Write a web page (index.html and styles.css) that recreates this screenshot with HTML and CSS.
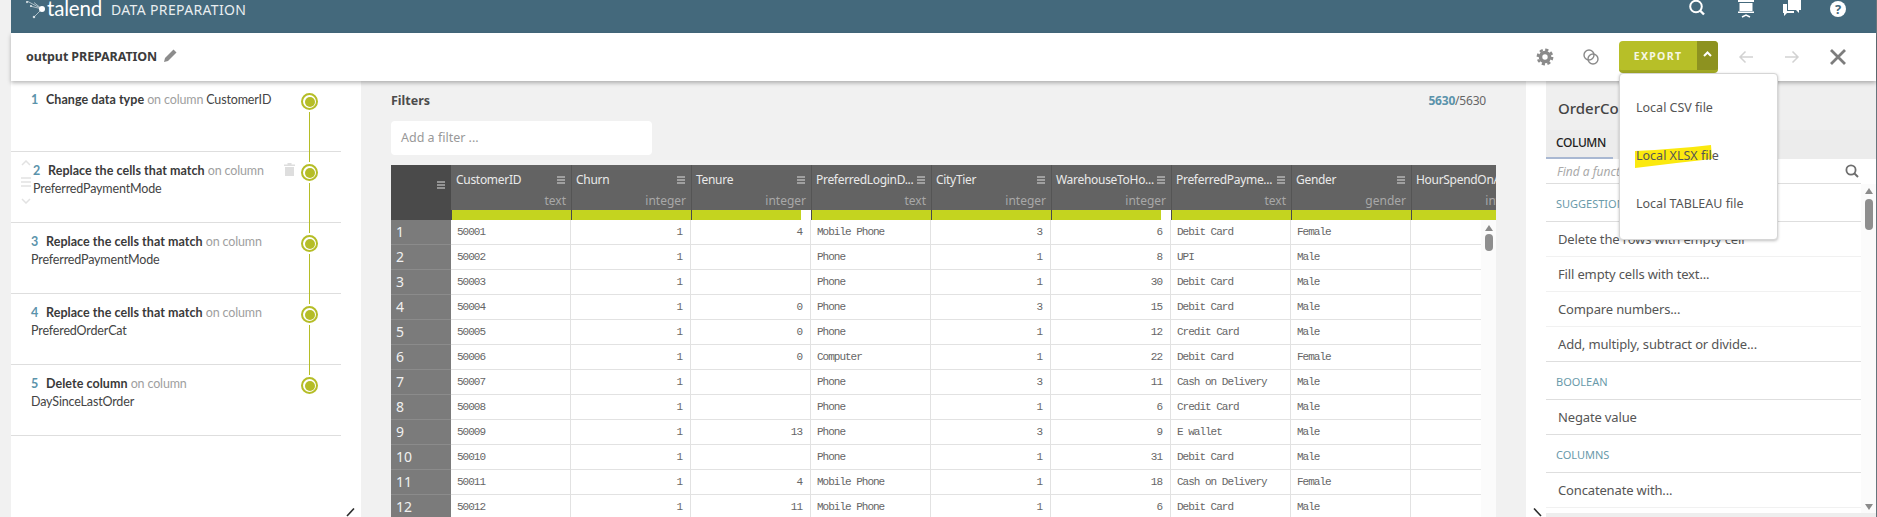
FILE: index.html
```html
<!DOCTYPE html>
<html lang="en">
<head>
<meta charset="utf-8">
<title>Talend Data Preparation</title>
<link rel="stylesheet" href="styles.css">
</head>
<body>
<svg class="defs" width="0" height="0" aria-hidden="true">
  <symbol id="ham" viewBox="0 0 8 8"><path d="M0 1h8M0 4h8M0 7h8" stroke="currentColor" stroke-width="1.2" fill="none"/></symbol>
</svg>
<div class="app">
  <header class="topbar">
    <div class="brand">
      <svg class="star" width="22" height="18" viewBox="0 0 22 18"><g stroke="#d8e2e6" stroke-width=".7" fill="#fff"><path d="M16 8 1 0M16 8 8 1.5M16 8 4 5M16 8 8 16" fill="none"/><circle cx="1" cy="1" r=".8"/><circle cx="8" cy="16" r=".9"/><circle cx="5" cy="5" r=".7"/></g><circle cx="16" cy="8" r="3" fill="#fff"/></svg>
      <span class="logo">talend</span>
      <span class="product">DATA PREPARATION</span>
    </div>
    <div class="top-icons">
      <span class="ibox shifted"><svg width="18" height="18" viewBox="0 0 18 18"><circle cx="8" cy="6.500" r="5.800" fill="none" stroke="#fff" stroke-width="2"/><path d="m12 10.500 4 4" stroke="#fff" stroke-width="2.400"/></svg></span>
      <span class="ibox"><svg width="18" height="18" viewBox="0 0 18 18"><path d="M1 0h16v2H1zM2.500 3h13v8h-13zM1 11.500h16V13H1z" fill="#fff"/><path d="m5 17 4-2 4 2" fill="none" stroke="#fff" stroke-width="1.500"/></svg></span>
      <span class="ibox"><svg width="18" height="18" viewBox="0 0 18 18"><path d="M5 0h13v10h-2v3l-3-3H5z" fill="#fff"/><path d="M0 4h4v7h7v2H4l-3 3v-3H0z" fill="#fff"/></svg></span>
      <span class="ibox"><span class="help">?</span></span>
    </div>
  </header>

  <div class="subbar">
    <div class="doc-title">
      <span>output PREPARATION</span>
      <svg width="14" height="14" viewBox="0 0 14 14"><path d="M10.500.500 13.500 3.500 5 12 1 13l1-4z" fill="#8c8c8c"/></svg>
    </div>
    <div class="actions">
      <span class="ibox"><svg width="18" height="18" viewBox="0 0 18 18"><circle cx="9" cy="9" r="4.500" fill="none" stroke="#8a8a8a" stroke-width="3.600"/><circle cx="9" cy="9" r="7.200" fill="none" stroke="#8a8a8a" stroke-width="2.400" stroke-dasharray="3.200 2.450"/></svg></span>
      <span class="ibox"><svg width="18" height="18" viewBox="0 0 18 18"><circle cx="7" cy="7" r="5" fill="none" stroke="#8a8a8a" stroke-width="1.400"/><circle cx="11" cy="11" r="5" fill="none" stroke="#8a8a8a" stroke-width="1.400"/></svg></span>
      <div class="export">
        <span class="export-label">EXPORT</span>
        <span class="export-caret"><svg width="9" height="6" viewBox="0 0 9 6"><path d="m1 5 3.500-3.500L8 5" fill="none" stroke="#fff" stroke-width="2"/></svg></span>
      </div>
      <span class="ibox"><svg width="16" height="14" viewBox="0 0 16 14"><path d="M15 7H2M7.500 1.500 2 7l5.500 5.500" fill="none" stroke="#d2d2d2" stroke-width="1.500"/></svg></span>
      <span class="ibox"><svg width="16" height="14" viewBox="0 0 16 14"><path d="M1 7h13M8.500 1.500 14 7l-5.500 5.500" fill="none" stroke="#d2d2d2" stroke-width="1.500"/></svg></span>
      <span class="ibox"><svg width="18" height="18" viewBox="0 0 18 18"><path d="m2 2 14 14M16 2 2 16" stroke="#7d7d7d" stroke-width="2.800"/></svg></span>
    </div>
    <div class="menu">
      <div class="menu-item">Local CSV file</div>
      <div class="menu-item">
        <svg class="marker" width="80" height="24" viewBox="0 0 80 24"><path d="M0 6Q40 4 76 0l1 14Q40 18 0 23z" fill="#fbe90e"/></svg>
        <span class="menu-text">Local XLSX file</span>
      </div>
      <div class="menu-item">Local TABLEAU file</div>
    </div>
  </div>

  <main class="main">
    <aside class="recipe">
      <div class="step first">
        <p class="step-text"><b class="num">1</b><b>Change data type</b> <i>on column</i> CustomerID</p>
        <span class="node"></span>
      </div>
      <div class="step hover">
        <span class="grip">
          <svg width="10" height="6" viewBox="0 0 10 6"><path d="m1 5 4-4 4 4" fill="none" stroke="#e2e2e2" stroke-width="1.500"/></svg>
          <svg width="10" height="10" viewBox="0 0 10 10"><path d="M0 1h10M0 5h10M0 9h10" stroke="#e2e2e2" stroke-width="1.500"/></svg>
          <svg width="10" height="6" viewBox="0 0 10 6"><path d="m1 1 4 4 4-4" fill="none" stroke="#e2e2e2" stroke-width="1.500"/></svg>
        </span>
        <p class="step-text"><b class="num">2</b><b>Replace the cells that match</b> <i>on column</i> PreferredPaymentMode</p>
        <svg class="trash" width="11" height="13" viewBox="0 0 11 13"><path d="M0 1.500h3.500V0h4v1.500H11V3H0zM1 4h9v9H1z" fill="#dedede"/></svg>
        <span class="node"></span>
      </div>
      <div class="step">
        <p class="step-text"><b class="num">3</b><b>Replace the cells that match</b> <i>on column</i> PreferredPaymentMode</p>
        <span class="node"></span>
      </div>
      <div class="step">
        <p class="step-text"><b class="num">4</b><b>Replace the cells that match</b> <i>on column</i> PreferedOrderCat</p>
        <span class="node"></span>
      </div>
      <div class="step">
        <p class="step-text"><b class="num">5</b><b>Delete column</b> <i>on column</i> DaySinceLastOrder</p>
        <span class="node"></span>
      </div>
      <svg class="collapse collapse-left" width="10" height="9" viewBox="0 0 10 9"><path d="M9 .5 2 8" fill="none" stroke="#2b2b2b" stroke-width="1.600"/></svg>
    </aside>

    <section class="center">
      <div class="filters-head">
        <span class="filters-title">Filters</span>
        <span class="count"><b>5630</b>/5630</span>
      </div>
      <div class="filter-input">Add a filter ...</div>
      <div class="table">
        <div class="thead">
          <div class="corner"><svg class="ham" width="8" height="8"><use href="#ham"/></svg></div>
          <div class="th"><div class="th-top"><span class="th-name">CustomerID</span><svg class="ham" width="8" height="8"><use href="#ham"/></svg></div><div class="th-type">text</div><div class="quality"></div></div>
          <div class="th"><div class="th-top"><span class="th-name">Churn</span><svg class="ham" width="8" height="8"><use href="#ham"/></svg></div><div class="th-type">integer</div><div class="quality"></div></div>
          <div class="th"><div class="th-top"><span class="th-name">Tenure</span><svg class="ham" width="8" height="8"><use href="#ham"/></svg></div><div class="th-type">integer</div><div class="quality gap"></div></div>
          <div class="th"><div class="th-top"><span class="th-name">PreferredLoginD...</span><svg class="ham" width="8" height="8"><use href="#ham"/></svg></div><div class="th-type">text</div><div class="quality"></div></div>
          <div class="th"><div class="th-top"><span class="th-name">CityTier</span><svg class="ham" width="8" height="8"><use href="#ham"/></svg></div><div class="th-type">integer</div><div class="quality"></div></div>
          <div class="th"><div class="th-top"><span class="th-name">WarehouseToHo...</span><svg class="ham" width="8" height="8"><use href="#ham"/></svg></div><div class="th-type">integer</div><div class="quality gap"></div></div>
          <div class="th"><div class="th-top"><span class="th-name">PreferredPayme...</span><svg class="ham" width="8" height="8"><use href="#ham"/></svg></div><div class="th-type">text</div><div class="quality"></div></div>
          <div class="th"><div class="th-top"><span class="th-name">Gender</span><svg class="ham" width="8" height="8"><use href="#ham"/></svg></div><div class="th-type">gender</div><div class="quality"></div></div>
          <div class="th"><div class="th-top"><span class="th-name">HourSpendOnApp</span></div><div class="th-type">integer</div><div class="quality"></div></div>
        </div>
        <div class="tbody-wrap">
          <div class="tbody">
            <div class="tr"><div class="idx">1</div><div class="td">50001</div><div class="td r">1</div><div class="td r">4</div><div class="td">Mobile Phone</div><div class="td r">3</div><div class="td r">6</div><div class="td">Debit Card</div><div class="td">Female</div><div class="td"></div></div>
            <div class="tr"><div class="idx">2</div><div class="td">50002</div><div class="td r">1</div><div class="td r"></div><div class="td">Phone</div><div class="td r">1</div><div class="td r">8</div><div class="td">UPI</div><div class="td">Male</div><div class="td"></div></div>
            <div class="tr"><div class="idx">3</div><div class="td">50003</div><div class="td r">1</div><div class="td r"></div><div class="td">Phone</div><div class="td r">1</div><div class="td r">30</div><div class="td">Debit Card</div><div class="td">Male</div><div class="td"></div></div>
            <div class="tr"><div class="idx">4</div><div class="td">50004</div><div class="td r">1</div><div class="td r">0</div><div class="td">Phone</div><div class="td r">3</div><div class="td r">15</div><div class="td">Debit Card</div><div class="td">Male</div><div class="td"></div></div>
            <div class="tr"><div class="idx">5</div><div class="td">50005</div><div class="td r">1</div><div class="td r">0</div><div class="td">Phone</div><div class="td r">1</div><div class="td r">12</div><div class="td">Credit Card</div><div class="td">Male</div><div class="td"></div></div>
            <div class="tr"><div class="idx">6</div><div class="td">50006</div><div class="td r">1</div><div class="td r">0</div><div class="td">Computer</div><div class="td r">1</div><div class="td r">22</div><div class="td">Debit Card</div><div class="td">Female</div><div class="td"></div></div>
            <div class="tr"><div class="idx">7</div><div class="td">50007</div><div class="td r">1</div><div class="td r"></div><div class="td">Phone</div><div class="td r">3</div><div class="td r">11</div><div class="td">Cash on Delivery</div><div class="td">Male</div><div class="td"></div></div>
            <div class="tr"><div class="idx">8</div><div class="td">50008</div><div class="td r">1</div><div class="td r"></div><div class="td">Phone</div><div class="td r">1</div><div class="td r">6</div><div class="td">Credit Card</div><div class="td">Male</div><div class="td"></div></div>
            <div class="tr"><div class="idx">9</div><div class="td">50009</div><div class="td r">1</div><div class="td r">13</div><div class="td">Phone</div><div class="td r">3</div><div class="td r">9</div><div class="td">E wallet</div><div class="td">Male</div><div class="td"></div></div>
            <div class="tr"><div class="idx">10</div><div class="td">50010</div><div class="td r">1</div><div class="td r"></div><div class="td">Phone</div><div class="td r">1</div><div class="td r">31</div><div class="td">Debit Card</div><div class="td">Male</div><div class="td"></div></div>
            <div class="tr"><div class="idx">11</div><div class="td">50011</div><div class="td r">1</div><div class="td r">4</div><div class="td">Mobile Phone</div><div class="td r">1</div><div class="td r">18</div><div class="td">Cash on Delivery</div><div class="td">Female</div><div class="td"></div></div>
            <div class="tr"><div class="idx">12</div><div class="td">50012</div><div class="td r">1</div><div class="td r">11</div><div class="td">Mobile Phone</div><div class="td r">1</div><div class="td r">6</div><div class="td">Debit Card</div><div class="td">Male</div><div class="td"></div></div>
          </div>
          <div class="vscroll">
            <span class="tri-up"></span>
            <span class="thumb"></span>
          </div>
        </div>
      </div>
    </section>

    <aside class="functions">
      <svg class="collapse collapse-right" width="10" height="9" viewBox="0 0 10 9"><path d="M1 .5 8 8" fill="none" stroke="#2b2b2b" stroke-width="1.600"/></svg>
      <div class="fn-head">
        <div class="fn-title">OrderCount</div>
        <div class="fn-tabs"><span class="fn-tab">COLUMN</span></div>
      </div>
      <div class="fn-search">
        <span>Find a function...</span>
        <svg width="14" height="14" viewBox="0 0 14 14"><circle cx="6" cy="6" r="4.600" fill="none" stroke="#6e6e6e" stroke-width="1.800"/><path d="m9.500 9.500 3.500 3.500" stroke="#6e6e6e" stroke-width="2"/></svg>
      </div>
      <div class="fn-body">
        <div class="fn-list">
          <div class="fn-group">SUGGESTIONS</div>
          <div class="fn-item">Delete the rows with empty cell</div>
          <div class="fn-item">Fill empty cells with text...</div>
          <div class="fn-item">Compare numbers...</div>
          <div class="fn-item last">Add, multiply, subtract or divide...</div>
          <div class="fn-group">BOOLEAN</div>
          <div class="fn-item last">Negate value</div>
          <div class="fn-group">COLUMNS</div>
          <div class="fn-item">Concatenate with...</div>
        </div>
        <div class="fn-scroll">
          <span class="tri-up"></span>
          <span class="thumb tall"></span>
          <span class="tri-down"></span>
        </div>
      </div>
      <div class="fn-foot"></div>
    </aside>
  </main>
</div>
</body>
</html>
```
FILE: styles.css
```css
* { box-sizing: border-box; }
html, body { margin: 0; height: 517px; overflow: hidden; }
body {
  background: #f1f1f1;
  font-family: "Noto Sans", "Liberation Sans", sans-serif;
  font-size: 12.5px;
  color: #444;
}
.defs { position: absolute; }
.app {
  margin-left: 11px;
  width: 1866px;
  height: 517px;
  border-right: 1px solid #66757c;
  display: flex;
  flex-direction: column;
}

/* top bar */
.topbar {
  flex: 0 0 33px;
  background: #44697c;
  display: flex;
  justify-content: space-between;
  align-items: center;
  padding: 0 15px 16px 15px;
  overflow: hidden;
}
.brand { display: flex; align-items: center; color: #fff; }
.star { margin-top: 2px; }
.logo {
  font-family: "Lato", sans-serif;
  font-size: 20.5px;
  letter-spacing: -.2px;
  margin-left: -1px;
  line-height: 17px;
  width: 64px;
}
.product {
  font-family: "Noto Sans", sans-serif;
  font-size: 14px;
  letter-spacing: .35px;
  color: #e9eef0;
  line-height: 17px;
  padding-top: 2px;
}
.top-icons, .actions { display: flex; align-items: center; }
.ibox { width: 46px; display: flex; justify-content: center; align-items: center; }
.ibox.shifted { margin-right: 3px; }
.help {
  width: 16px; height: 16px; border-radius: 50%;
  background: #fff; color: #44697c;
  font: 700 13px/16px "Noto Sans", sans-serif;
  text-align: center;
}

/* sub bar */
.subbar {
  flex: 0 0 48px;
  background: #fff;
  box-shadow: 0 2px 4px rgba(0,0,0,.28);
  display: flex;
  justify-content: space-between;
  align-items: center;
  padding: 0 15px;
  position: relative;
  z-index: 3;
}
.doc-title {
  display: flex; align-items: center; gap: 6px;
  font-weight: 700; font-size: 12.5px; color: #3c3c3c;
  letter-spacing: -.1px;
  padding-bottom: 2px;
}
.export {
  width: 99px; height: 32px;
  margin: 0 5px;
  display: flex;
  border-radius: 4px;
  overflow: hidden;
  background: #b7bf28;
  border-bottom: 3px solid #a1a824;
  color: #f6f7e4;
}
.export-label {
  flex: 1;
  text-align: center;
  font-weight: 700; font-size: 10.5px; letter-spacing: 1.3px;
  line-height: 31px;
}
.export-caret {
  flex: 0 0 21px;
  background: #8d9220;
  display: flex; justify-content: center; align-items: flex-start;
  padding-top: 10px;
  margin-bottom: -3px;
}
.menu {
  position: absolute;
  right: 98px; top: 40px;
  width: 159px;
  padding: 10px 0 11px;
  background: #fff;
  border: 1px solid #d6d6d6;
  border-radius: 4px;
  box-shadow: 0 1px 3px rgba(0,0,0,.25);
  z-index: 5;
}
.menu-item {
  height: 48px;
  line-height: 48px;
  padding-left: 16px;
  font-size: 12.5px;
  color: #555;
  position: relative;
}
.marker { position: absolute; left: 15px; top: 13px; }
.menu-text { position: relative; }

/* main */
.main { flex: 1; display: flex; min-height: 0; overflow: hidden; }

/* recipe */
.recipe {
  flex: 0 0 350px;
  background: #fff;
  position: relative;
}
.step {
  width: 330px;
  height: 71px;
  border-bottom: 1px solid #dedede;
  padding: 10px 66px 0 20px;
  position: relative;
}
.step-text {
  margin: 0;
  line-height: 18px;
  font-family: "Lato", sans-serif;
  font-size: 12.5px;
  letter-spacing: -.15px;
  color: #444;
}
.step-text b { font-weight: 700; color: #3a3a3a; letter-spacing: .05px; }
.step-text i { font-style: normal; color: #a0a0a0; }
.step-text .num { display: inline-block; width: 15px; color: #5b93ab; }
.step.hover { padding-left: 22px; }
.grip {
  position: absolute; left: 10px; top: 8px;
  display: flex; flex-direction: column; gap: 11px; align-items: center;
}
.trash { position: absolute; left: 273px; top: 11px; }
.node {
  position: absolute;
  left: 290px; top: 12px;
  width: 17px; height: 17px;
  border-radius: 50%;
  border: 2px solid #b5bd27;
  background: #fff;
  display: flex;
}
.node::before {
  content: "";
  margin: 1.500px;
  flex: 1;
  border-radius: 50%;
  background: #b5bd27;
}
.step::after {
  content: "";
  position: absolute;
  left: 298px; top: 31px;
  width: 1px; height: 50px;
  background: #b5bd27;
  z-index: 1;
}
.step:last-of-type::after { display: none; }
.collapse { position: absolute; bottom: 0; }
.collapse-left { right: 6px; }
.collapse-right { left: 7px; }

/* center */
.center { flex: 1; padding: 0 30px; min-width: 0; }
.filters-head {
  height: 38px;
  margin-bottom: 2px;
  display: flex; justify-content: space-between; align-items: center;
  width: 1095px;
}
.filters-title { font-weight: 700; font-size: 12.5px; color: #4c4c4c; }
.count { font-size: 12px; color: #666; letter-spacing: -.2px; }
.count b { color: #5b93ab; font-weight: 700; }
.filter-input {
  width: 261px; height: 34px;
  background: #fff;
  border-radius: 4px;
  padding-left: 10px;
  line-height: 34px;
  color: #999;
  font-size: 12.5px;
}
.table { width: 1105px; margin-top: 10px; overflow: hidden; }
.thead {
  display: grid;
  grid-template-columns: 60px repeat(9, 120px);
  height: 55px;
  background: #636363;
}
.corner {
  background: #4a4a4a;
  color: #ddd;
  padding: 11px 6px 0 46px;
}
.th { box-shadow: inset 1px 0 0 #555; position: relative; }
.corner + .th { box-shadow: none; }
.th-top {
  height: 27px;
  display: flex; justify-content: space-between; align-items: center;
  padding: 2px 6px 0 5px;
  color: #eaeaea;
}
.th-top .ham { color: #ddd; flex: none; }
.th-name { font-size: 12px; white-space: nowrap; letter-spacing: -.3px; }
.th-type {
  height: 18px;
  text-align: right;
  padding-right: 5px;
  color: #a8a8a8;
  font-size: 12px;
  line-height: 18px;
}
.quality { height: 10px; background: #c4d41f; box-shadow: inset 1px 0 0 #4a4a4a; }
.quality.gap { border-right: 10px solid #fff; }

.tbody-wrap { display: flex; }
.tbody { width: 1090px; overflow: hidden; flex: none; }
.tr {
  display: grid;
  grid-template-columns: 60px repeat(9, 120px);
  grid-template-rows: 25px;
  height: 25px;
}
.idx {
  background: #7b7b7b;
  border-bottom: 1px solid #8b8b8b;
  color: #f0f0f0;
  padding-left: 5px;
  font-size: 14px;
  line-height: 24px;
}
.td {
  background: #fff;
  border-right: 1px solid #e2e2e2;
  border-bottom: 1px solid #e2e2e2;
  padding: 1px 8px 0 6px;
  font-family: "Liberation Mono", "DejaVu Sans Mono", monospace;
  font-size: 11px;
  letter-spacing: -1px;
  line-height: 23px;
  color: #666;
  white-space: nowrap;
}
.td.r { text-align: right; }
.vscroll, .fn-scroll {
  flex: 0 0 15px;
  background: #fbfbfb;
  display: flex; flex-direction: column; align-items: center;
}
.vscroll { padding-top: 5px; }
.tri-up { width: 0; height: 0; border: 4.500px solid transparent; border-top: 0; border-bottom: 6px solid #8b8b8b; }
.tri-down { width: 0; height: 0; border: 4.500px solid transparent; border-bottom: 0; border-top: 6px solid #8b8b8b; margin-top: auto; }
.thumb { width: 8px; height: 17px; margin-top: 3px; border-radius: 4px; background: #8e8e8e; }
.thumb.tall { height: 31px; margin-top: 5px; }

/* functions */
.functions {
  flex: 0 0 350px;
  background: #fff;
  padding-left: 20px;
  position: relative;
  display: flex;
  flex-direction: column;
}
.fn-head { height: 78px; background: #efefef; }
.fn-title {
  height: 49px;
  padding: 17px 0 0 12px;
  font-size: 15px;
  font-weight: 500;
  color: #444;
  line-height: 20px;
}
.fn-tabs { height: 29px; background: #ececec; }
.fn-tab {
  display: block;
  width: 67px; height: 29px;
  padding-left: 10px;
  line-height: 25px;
  font-size: 12px;
  color: #222;
  letter-spacing: -.4px;
  font-weight: 500;
  border-bottom: 2px solid #a9b8d2;
}
.fn-search {
  height: 25px;
  width: 315px;
  border-bottom: 1px solid #dedede;
  display: flex; justify-content: space-between; align-items: center;
  padding: 0 2px 0 11px;
  font-style: italic;
  font-size: 12px;
  color: #aaa;
}
.fn-body { height: 329px; display: flex; overflow: hidden; flex: none; }
.fn-list { width: 315px; flex: none; }
.fn-group {
  height: 38px;
  padding: 1px 0 0 10px;
  line-height: 37px;
  font-size: 11px;
  color: #6a9aaa;
  border-bottom: 1px solid #dedede;
}
.fn-item {
  height: 35px;
  padding-left: 12px;
  line-height: 34px;
  font-size: 13px;
  letter-spacing: -.15px;
  color: #555;
  border-bottom: 1px solid #f1f1f1;
}
.fn-item.last { border-bottom-color: #dedede; }
.fn-scroll { padding: 4px 0 3px; }
.fn-foot { flex: 1; background: #eeeeee; }
```
